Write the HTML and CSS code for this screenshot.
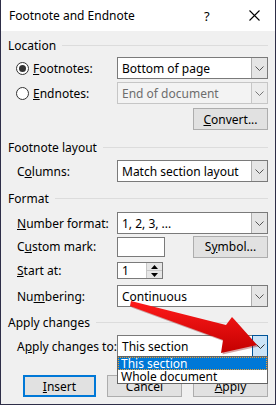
FILE: index.html
```html
<!DOCTYPE html>
<html lang="en">
<head>
  <meta charset="UTF-8" />
  <title>Footnote and Endnote</title>
  <link rel="stylesheet" href="styles.css">
</head>
<body>

  <div class="dialog">

    <!-- title bar -->
    <div class="titlebar">
      <span class="title">Footnote and Endnote</span>
      <span class="help">?</span>
      <svg class="close" width="11" height="11" viewBox="0 0 11 11"><path d="M0.5 0.5L10.5 10.5M10.5 0.5L0.5 10.5" stroke="#000" stroke-width="1.1" fill="none"/></svg>
    </div>

    <div class="content">

      <!-- Location -->
      <div class="group"><span>Location</span><i></i></div>
      <div class="row r-foot">
        <label class="lbl radio-lbl"><span class="radio on"></span><u>F</u>ootnotes:</label>
        <div class="combo"><span class="val">Bottom of page</span><span class="drop"><svg width="9" height="5" viewBox="0 0 9 5"><path d="M0.5 0.5L4.5 4.5L8.5 0.5" stroke="#555" fill="none"/></svg></span></div>
      </div>
      <div class="row r-end">
        <label class="lbl radio-lbl"><span class="radio"></span><u>E</u>ndnotes:</label>
        <div class="combo disabled"><span class="val">End of document</span><span class="drop"><svg width="9" height="5" viewBox="0 0 9 5"><path d="M0.5 0.5L4.5 4.5L8.5 0.5" stroke="#777" fill="none"/></svg></span></div>
      </div>
      <div class="row r-conv">
        <button class="btn side"><u>C</u>onvert...</button>
      </div>

      <!-- Footnote layout -->
      <div class="group g-layout"><span>Footnote layout</span><i></i></div>
      <div class="row r-cols">
        <label class="lbl">C<u>o</u>lumns:</label>
        <div class="combo"><span class="val">Match section layout</span><span class="drop"><svg width="9" height="5" viewBox="0 0 9 5"><path d="M0.5 0.5L4.5 4.5L8.5 0.5" stroke="#555" fill="none"/></svg></span></div>
      </div>

      <!-- Format -->
      <div class="group g-format"><span>Format</span><i></i></div>
      <div class="row r-numfmt">
        <label class="lbl"><u>N</u>umber format:</label>
        <div class="combo"><span class="val">1, 2, 3, ...</span><span class="drop"><svg width="9" height="5" viewBox="0 0 9 5"><path d="M0.5 0.5L4.5 4.5L8.5 0.5" stroke="#555" fill="none"/></svg></span></div>
      </div>
      <div class="row r-custom">
        <label class="lbl">C<u>u</u>stom mark:</label>
        <div class="textbox mark"></div>
        <button class="btn side">S<u>y</u>mbol...</button>
      </div>
      <div class="row r-start">
        <label class="lbl"><u>S</u>tart at:</label>
        <div class="textbox spin">
          <span class="val">1</span>
          <span class="spinner">
            <span class="up"><svg width="7" height="4" viewBox="0 0 7 4"><path d="M0 4L3.5 0L7 4Z" fill="#000"/></svg></span>
            <span class="down"><svg width="7" height="4" viewBox="0 0 7 4"><path d="M0 0L3.5 4L7 0Z" fill="#000"/></svg></span>
          </span>
        </div>
      </div>
      <div class="row r-numbering">
        <label class="lbl">Nu<u>m</u>bering:</label>
        <div class="combo"><span class="val">Continuous</span><span class="drop"><svg width="9" height="5" viewBox="0 0 9 5"><path d="M0.5 0.5L4.5 4.5L8.5 0.5" stroke="#555" fill="none"/></svg></span></div>
      </div>

      <!-- Apply changes -->
      <div class="group g-apply"><span>Apply changes</span><i></i></div>
      <div class="row r-applyto">
        <label class="lbl">A<u>p</u>ply changes to:</label>
        <div class="combo open">
          <span class="val">This section</span>
          <span class="drop"><svg width="9" height="5" viewBox="0 0 9 5"><path d="M0.5 0.5L4.5 4.5L8.5 0.5" stroke="#333" fill="none"/></svg></span>
          <div class="list">
            <div class="item sel">This section</div>
            <div class="item">Whole document</div>
          </div>
        </div>
      </div>

      <div class="buttons">
        <button class="btn default"><u>I</u>nsert</button>
        <button class="btn">Cancel</button>
        <button class="btn"><u>A</u>pply</button>
      </div>

    </div>

    <!-- red arrow pointing to the dropdown -->
    <svg class="arrow" width="276" height="405" viewBox="0 0 276 405">
      <defs>
        <linearGradient id="ag" x1="0" y1="0" x2="0" y2="1">
          <stop offset="0" stop-color="#ff1a1a"/>
          <stop offset="1" stop-color="#c40000"/>
        </linearGradient>
      </defs>
      <path d="M131 301 L226 325 L232 317 L257 345 L221 353 L223 340 L130 306 Z" fill="#8a0000" opacity="0.35" transform="translate(1.5 1.5)"/>
      <path d="M131 301 L226 325 L232 317 L257 345 L221 353 L223 340 L130 306 Z" fill="url(#ag)"/>
    </svg>

  </div>

</body>
</html>
```

FILE: styles.css
```css
body { margin: 0; font-family: "Noto Sans", "Open Sans", sans-serif; font-size: 12px; color: #000; }
u { text-decoration: underline; text-underline-offset: 1px; }

.dialog { position: relative; width: 276px; height: 405px; box-sizing: border-box; background: #f0f0f0; border: 1px solid #2e2e48; border-top: none; overflow: hidden; }

.titlebar { height: 31px; background: #fff; display: flex; align-items: center; padding-left: 8px; }
.title { flex: 1; font-size: 12px; }
.help { width: 12px; margin-right: 33px; font-size: 13px; }
.close { margin-right: 15px; }

.content { padding: 0 7px 0 7px; }

.group { display: flex; align-items: center; height: 16px; margin-top: 6px; }
.group i { flex: 1; height: 1px; background: #dcdcdc; margin-left: 6px; margin-top: 1px; }
.g-layout { margin-top: 9px; }
.g-format { margin-top: 8px; }
.g-apply { margin-top: 7px; }

.row { display: flex; align-items: center; }
.lbl { width: 109px; padding-left: 9px; box-sizing: border-box; white-space: nowrap; }
.radio-lbl { display: flex; align-items: center; padding-left: 8px; }
.radio { width: 11px; height: 11px; border: 1px solid #333; border-radius: 50%; background: #fff; margin-right: 4px; position: relative; }
.radio.on::after { content: ""; position: absolute; left: 2px; top: 2px; width: 7px; height: 7px; border-radius: 50%; background: #333; }

.combo { position: relative; flex: 1; height: 22px; box-sizing: border-box; background: #fff; border: 1px solid #7a7a7a; display: flex; align-items: center; }
.combo .val { flex: 1; padding-left: 4px; }
.combo .drop { width: 16px; height: 100%; box-sizing: border-box; background: #e5e5e5; border-left: 1px solid #adadad; display: flex; align-items: center; justify-content: center; }
.combo.disabled { background: #f3f3f3; border-color: #c6c6c6; color: #6d6d6d; }
.combo.disabled .drop { background: #ececec; border-left-color: #c6c6c6; }

.r-foot { margin-top: 4px; }
.r-end { margin-top: 3px; }
.r-conv { justify-content: flex-end; margin-top: 4px; }
.r-cols { margin-top: 5px; }
.r-numfmt { margin-top: 6px; }
.r-custom { margin-top: 2px; height: 21px; }
.r-start { margin-top: 5px; }
.r-numbering { margin-top: 6px; }
.r-applyto { margin-top: 5px; }

.btn { font-family: inherit; font-size: 12px; color: #000; background: #e1e1e1; border: 1px solid #adadad; height: 22px; width: 75px; padding: 0; box-sizing: border-box; }
.btn.side { margin-left: auto; }

.textbox { background: #fff; border: 1px solid #7a7a7a; box-sizing: border-box; }
.mark { width: 48px; height: 20px; margin-top: 1px; }
.spin { width: 46px; height: 17px; display: flex; align-items: center; }
.spin .val { flex: 1; padding-left: 4px; }
.spinner { width: 15px; height: 100%; display: flex; flex-direction: column; border-left: 1px solid #c6c6c6; }
.spinner span { flex: 1; background: #e6e6e6; display: flex; align-items: center; justify-content: center; }
.spinner .up { border-bottom: 1px solid #c6c6c6; }

.combo.open .drop { background: #cce4f7; border: 1px solid #005499; margin-right: -1px; height: 22px; }
.list { position: absolute; left: -1px; right: -1px; top: 20px; background: #fff; border: 1px solid #646464; z-index: 2; }
.item { height: 13px; line-height: 13px; padding-left: 3px; }
.item.sel { background: #0078d7; color: #fff; outline: 1px dotted #f0a030; outline-offset: -1px; }

.buttons { display: flex; justify-content: flex-end; gap: 11px; margin-top: 18px; }
.btn.default { border: 2px solid #0078d7; width: 73px; margin-right: 0; }

.arrow { position: absolute; left: -1px; top: 0; z-index: 3; pointer-events: none; }
```
